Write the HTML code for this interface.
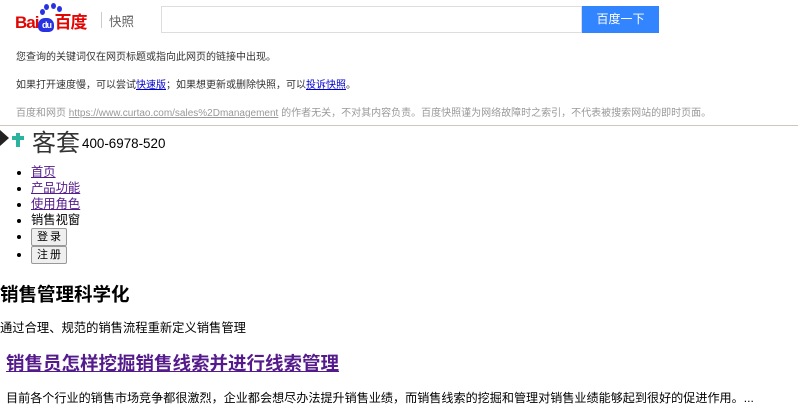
<!DOCTYPE html>
<html><head><meta charset="utf-8"><style>
body{margin:0;width:798px;height:412px;overflow:hidden;background:#fff;font-family:"Liberation Sans","Noto Sans CJK SC",sans-serif;position:relative;color:#000}
.a{position:absolute;white-space:nowrap}
.g{font-size:10px;color:#333}
a{color:#00c}
.nav{position:absolute;left:0;top:164px;margin:0;padding-left:31px;font-size:12.3px;line-height:16px}
.nav li{height:16px;white-space:nowrap}
.nav a{color:#551a8b}
.nav button{font-size:11px;letter-spacing:2px;padding:0 0 0 2px;width:36px;height:18px;line-height:16px;white-space:nowrap;background:#efefef;border:1px solid #999;border-radius:2px;font-family:inherit;color:#000;vertical-align:top}
</style></head><body>
<div class="a" style="left:15px;top:8px;font-size:17px;font-weight:bold;color:#e10602;letter-spacing:-1px">Bai<span style="display:inline-block;width:16px;height:14px;background:#2932e1;border-radius:7px 7px 5px 5px;color:#fff;font-size:9px;text-align:center;line-height:14px;vertical-align:0">du</span>百度</div>
<div class="a" style="left:44px;top:4px;width:5px;height:6px;background:#2932e1;border-radius:50%;box-shadow:7px -1px 0 #2932e1,13px 2px 0 #2932e1,-4px 5px 0 #2932e1"></div>
<div class="a" style="left:101px;top:12px;width:1px;height:16px;background:#ccc"></div>
<div class="a" style="left:109px;top:11px;font-size:12.5px;color:#666">快照</div>
<div class="a" style="left:161px;top:6px;width:419px;height:25px;border:1px solid #ddd"></div>
<div class="a" style="left:582px;top:6px;width:77px;height:27px;background:#3385ff;color:#fff;font-size:12px;text-align:center;line-height:27px">百度一下</div>
<div class="a g" style="left:16px;top:48px">您查询的关键词仅在网页标题或指向此网页的链接中出现。</div>
<div class="a g" style="left:16px;top:76px">如果打开速度慢，可以尝试<a href="#">快速版</a>；如果想更新或删除快照，可以<a href="#">投诉快照</a>。</div>
<div class="a g" style="left:16px;top:104px;color:#999">百度和网页 <u>https://www.curtao.com/sales%2Dmanagement</u> 的作者无关，不对其内容负责。百度快照谨为网络故障时之索引，不代表被搜索网站的即时页面。</div>
<div class="a" style="left:0;top:125px;width:798px;height:1px;background:#ccc8c0"></div>
<div class="a" style="left:0;top:130px;width:0;height:0;border-left:9px solid #222;border-top:8px solid transparent;border-bottom:8px solid transparent"></div>
<div class="a" style="left:16px;top:133px;width:4px;height:14px;background:#2bb3a0"></div>
<div class="a" style="left:12px;top:136px;width:12px;height:4px;background:#2bb3a0"></div>
<div class="a" style="left:32px;top:123px;font-size:24px;color:#333">客套</div>
<div class="a" style="left:82px;top:136px;font-size:13.4px">400-6978-520</div>
<ul class="nav">
<li><a href="#">首页</a></li>
<li><a href="#">产品功能</a></li>
<li><a href="#">使用角色</a></li>
<li>销售视窗</li>
<li style="height:18px"><button>登录</button></li>
<li><button>注册</button></li>
</ul>
<div class="a" style="left:0;top:281px;font-size:18.5px;font-weight:bold">销售管理科学化</div>
<div class="a" style="left:0;top:318px;font-size:12.3px">通过合理、规范的销售流程重新定义销售管理</div>
<div class="a" style="left:6px;top:350px;font-size:18.5px;font-weight:bold"><a href="#" style="color:#551a8b">销售员怎样挖掘销售线索并进行线索管理</a></div>
<div class="a" style="left:6px;top:389px;font-size:12.1px">目前各个行业的销售市场竞争都很激烈，企业都会想尽办法提升销售业绩，而销售线索的挖掘和管理对销售业绩能够起到很好的促进作用。...</div>
</body></html>
